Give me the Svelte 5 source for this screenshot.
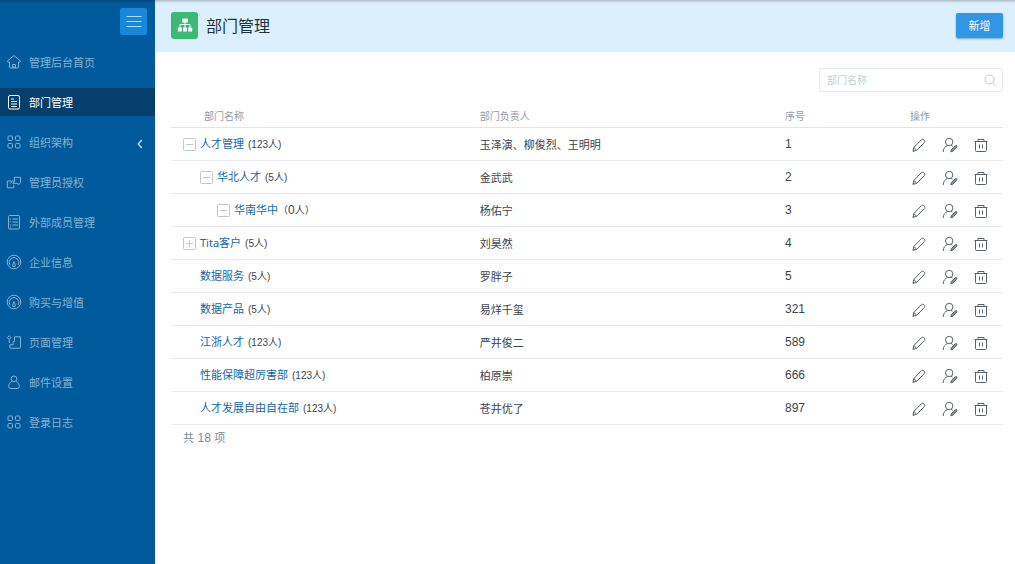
<script>
  const menu = [
    { label: "管理后台首页", icon: "home" },
    { label: "部门管理", icon: "doc", active: true },
    { label: "组织架构", icon: "grid", children: true },
    { label: "管理员授权", icon: "share" },
    { label: "外部成员管理", icon: "list" },
    { label: "企业信息", icon: "gauge" },
    { label: "购买与增值", icon: "gauge" },
    { label: "页面管理", icon: "page" },
    { label: "邮件设置", icon: "user" },
    { label: "登录日志", icon: "grid" },
  ];

  const departments = [
    { name: "人才管理", count: 123, leader: "玉泽演、柳俊烈、王明明", order: 1, level: 0, toggle: "minus" },
    { name: "华北人才", count: 5, leader: "金武武", order: 2, level: 1, toggle: "minus" },
    { name: "华南华中", count: 0, leader: "杨佑宁", order: 3, level: 2, toggle: "minus" },
    { name: "Tita客户", count: 5, leader: "刘昊然", order: 4, level: 0, toggle: "plus" },
    { name: "数据服务", count: 5, leader: "罗胖子", order: 5, level: 0 },
    { name: "数据产品", count: 5, leader: "易烊千玺", order: 321, level: 0 },
    { name: "江浙人才", count: 123, leader: "严井俊二", order: 589, level: 0 },
    { name: "性能保障超厉害部", count: 123, leader: "柏原崇", order: 666, level: 0 },
    { name: "人才发展自由自在部", count: 123, leader: "苍井优了", order: 897, level: 0 },
  ];

  let keyword = $state("");
</script>

{#snippet menuIcon(name)}
  <svg class="menu-icon" viewBox="0 0 16 16" aria-hidden="true">
    {#if name === "home"}
      <path d="M3.5 8v5q0 1 1 1h7q1 0 1-1V8l1.3.3.8-1.2L8.7 2q-.7-.5-1.4 0L1.4 7.1l.8 1.2zM6.5 14v-3.5h3V14M8 12v2" />
    {:else if name === "doc"}
      <rect x="2.5" y="1.5" width="11" height="13.5" rx="1.5" />
      <path d="M5 5h3M5 7.5h6M5 10h6M5 12.5h6" />
    {:else if name === "grid"}
      <rect x="2" y="2" width="4.5" height="4.5" rx="1" />
      <rect x="9.5" y="2" width="4.5" height="4.5" rx="1" />
      <rect x="2" y="9.5" width="4.5" height="4.5" rx="1" />
      <rect x="9.5" y="9.5" width="4.5" height="4.5" rx="1" />
    {:else if name === "share"}
      <path d="M5.5 7H1.3v6.8h6.5v-3M8.2 3.3h6.3v5.2L13 10.5l-2-1.2H6.7l2-1.5zM4.3 9.5l2.2-3 1.7 1.3" />
    {:else if name === "list"}
      <rect x="2.5" y="1.5" width="11" height="13.5" rx="1" />
      <path d="M6.5 5H12M6.5 8H12M6.5 11H12M4 5h1M4 8h1M4 11h1M4 13h1" />
    {:else if name === "gauge"}
      <circle cx="8" cy="8" r="6.8" />
      <path d="M4 11A4.8 4.8 0 1 1 12 11M8 7.5l1.2 3.4a1.3 1.3 0 1 1-2.4 0z" />
    {:else if name === "page"}
      <path d="M8.5 6.2V2.8h6v10.7q0 .7-.7.7H4.5q-.7 0-.7-.7v-2.7h3.4V7.5h1.3zM3.3 5.5v3.5M3.3 1.8 5.2 3.6l-1.9 1.9-1.9-1.9z" />
    {:else if name === "user"}
      <circle cx="8" cy="4.8" r="2.8" />
      <path d="M5.8 7.5C3.8 8.3 2.7 10.3 2.7 12.5q0 2 2 2h6.6q2 0 2-2c0-2.2-1.1-4.2-3.1-5" />
    {/if}
  </svg>
{/snippet}

<div class="layout">
  <aside class="sidebar">
    <div class="sidebar-top">
      <button class="collapse" type="button" aria-label="菜单">
        <svg viewBox="0 0 16 16" aria-hidden="true">
          <path d="M.5 2.5h15M.5 7.5h15M.5 12.5h15" />
        </svg>
      </button>
    </div>
    <nav>
      <ul>
        {#each menu as item}
          <li>
            <a href="#menu" class:active={item.active}>
              {@render menuIcon(item.icon)}
              <span>{item.label}</span>
              {#if item.children}
                <svg class="arrow" viewBox="0 0 6 10" aria-hidden="true"><path d="M4.8 1 1.2 5l3.6 4" /></svg>
              {/if}
            </a>
          </li>
        {/each}
      </ul>
    </nav>
  </aside>

  <main>
    <header>
      <span class="logo">
        <svg viewBox="0 0 16 16" aria-hidden="true">
          <path d="M8 5v6M3 11V7.5h10V11" />
          <rect x="5.2" y="1.5" width="5.6" height="4" rx="0.6" />
          <rect x="0.8" y="10.5" width="4" height="4" rx="0.6" />
          <rect x="6" y="10.5" width="4" height="4" rx="0.6" />
          <rect x="11.2" y="10.5" width="4" height="4" rx="0.6" />
        </svg>
      </span>
      <h1>部门管理</h1>
      <button class="add" type="button">新增</button>
    </header>

    <section class="content">
      <div class="search">
        <input type="text" placeholder="部门名称" aria-label="部门名称" bind:value={keyword} />
        <svg viewBox="0 0 12 12" aria-hidden="true">
          <circle cx="5.5" cy="5.5" r="4.5" />
          <path d="m9 9 2.3 2.3" />
        </svg>
      </div>

      <table>
        <thead>
          <tr>
            <th class="col-name">部门名称</th>
            <th class="col-leader">部门负责人</th>
            <th class="col-order">序号</th>
            <th class="col-actions">操作</th>
          </tr>
        </thead>
        <tbody>
          {#each departments as dept}
            <tr>
              <td>
                <div class="name level-{dept.level}">
                  {#if dept.toggle}
                    <button class="toggle" type="button" aria-label={dept.toggle === "plus" ? "展开" : "收起"}>
                      <svg viewBox="0 0 13 13" aria-hidden="true">
                        <rect x="0.5" y="0.5" width="12" height="12" rx="1" />
                        <path d={dept.toggle === "plus" ? "M3 6.5h7M6.5 3v7" : "M3 6.5h7"} />
                      </svg>
                    </button>
                  {:else}
                    <span class="toggle"></span>
                  {/if}
                  <div>
                    <a href="#dept">{dept.name}</a>{#if dept.count}<span class="count">({dept.count}人)</span>{:else}<span class="count empty">（<b>{dept.count}</b>人）</span>{/if}
                  </div>
                </div>
              </td>
              <td class="leader">{dept.leader}</td>
              <td class="order">{dept.order}</td>
              <td>
                <div class="actions">
                  <button type="button" aria-label="编辑">
                    <svg viewBox="0 0 16 16" aria-hidden="true">
                      <path d="M2 14.3l.8-3.8 7.6-7.8q1.2-1.1 2.4 0l.5.5q1.1 1.2 0 2.4l-7.6 7.8zM2.8 10.5l3 2.9M2 14.3l1.6-1.6" />
                    </svg>
                  </button>
                  <button type="button" aria-label="设置负责人">
                    <svg viewBox="0 0 16 16" aria-hidden="true">
                      <circle cx="7.2" cy="5" r="3.7" />
                      <path d="M1.2 15c0-3.5 1.8-5.4 4.3-6.4M9 8.3l1.5.9" />
                      <path class="nib" d="M8.8 14.8l.5-2.2 4-3.9q1-.6 1.4 0t0 1.6l-3.8 3.9z" />
                    </svg>
                  </button>
                  <button type="button" aria-label="删除">
                    <svg viewBox="0 0 16 16" aria-hidden="true">
                      <path d="M1.5 4.5h13M5 4.3V2.5h6v1.8M2.5 4.5v9q0 1 1 1h9q1 0 1-1v-9M6.5 7.5v4M9.5 7.5v4" />
                    </svg>
                  </button>
                </div>
              </td>
            </tr>
          {/each}
        </tbody>
      </table>
      <p class="total">共 <span>18</span> 项</p>
    </section>
  </main>
</div>

<style>
  :global(body) {
    margin: 0;
    background: #fff;
    font-family: "Noto Sans CJK SC", sans-serif;
    font-size: 11px;
    color: #3c444d;
  }

  svg {
    display: block;
    fill: none;
    stroke: currentColor;
    stroke-width: 1;
  }

  button {
    padding: 0;
    border: 0;
    background: none;
    color: inherit;
    font: inherit;
    cursor: pointer;
  }

  a {
    color: inherit;
    text-decoration: none;
  }

  .layout {
    display: flex;
    min-height: 100vh;
  }

  .layout::before {
    content: "";
    position: fixed;
    top: 0;
    left: 0;
    right: 0;
    height: 3px;
    background: linear-gradient(rgba(0, 0, 0, 0.22), rgba(0, 0, 0, 0));
  }

  /* sidebar */
  .sidebar {
    flex: none;
    width: 155px;
    background: #005a9b;
    color: #85b2d3;
  }

  .sidebar-top {
    display: flex;
    justify-content: flex-end;
    padding: 8px 8px 7px;
  }

  .collapse {
    display: grid;
    place-items: center;
    width: 27px;
    height: 27px;
    border-radius: 2px;
    background: #1787db;
    color: #b9dcf6;
  }

  .collapse svg {
    width: 16px;
    height: 16px;
  }

  ul {
    margin: 0;
    padding: 0;
    list-style: none;
  }

  li {
    display: flex;
    align-items: center;
    height: 40px;
  }

  li a {
    display: flex;
    flex: 1;
    align-items: center;
    gap: 7px;
    height: 28px;
    padding: 0 12px 0 6px;
  }

  li a.active {
    background: #05406d;
    color: #fff;
  }

  .menu-icon {
    width: 16px;
    height: 16px;
  }

  .arrow {
    width: 6px;
    height: 10px;
    margin: 4px 0 0 auto;
    color: #c2dcee;
    stroke-width: 1.4;
  }

  /* page header */
  main {
    flex: 1;
    min-width: 0;
  }

  header {
    display: flex;
    align-items: center;
    box-sizing: border-box;
    height: 52px;
    padding: 0 12px 2px 16px;
    background: #dceffd;
  }

  .logo {
    display: grid;
    place-items: center;
    width: 27px;
    height: 27px;
    border-radius: 3px;
    background: #3bba76;
  }

  .logo svg {
    width: 16px;
    height: 16px;
    color: #fff;
  }

  .logo rect {
    fill: #fff;
    stroke: none;
  }

  h1 {
    margin: 0 auto 0 8px;
    font-size: 16px;
    font-weight: 400;
    line-height: 24px;
    color: #22303d;
  }

  .add {
    width: 47px;
    height: 25px;
    border-radius: 2px;
    background: #3296e6;
    box-shadow: 0 1px 2px rgba(30, 90, 150, 0.5);
    color: #fff;
  }

  /* table area */
  .content {
    padding: 16px 12px 16px 16px;
  }

  .search {
    display: flex;
    align-items: center;
    box-sizing: border-box;
    width: 184px;
    height: 24px;
    margin: 0 0 12px auto;
    padding: 0 6px 0 7px;
    border: 1px solid #e6e9ec;
    border-radius: 3px;
    color: #c3c9ce;
  }

  .search input {
    flex: 1;
    min-width: 0;
    height: 20px;
    padding: 0 0 2px;
    border: 0;
    outline: 0;
    background: none;
    color: #3c444d;
    font: inherit;
    font-size: 10px;
  }

  .search input::placeholder {
    color: #c8cdd2;
    opacity: 1;
  }

  .search svg {
    width: 12px;
    height: 12px;
  }

  table {
    width: 100%;
    border-collapse: separate;
    border-spacing: 0;
    table-layout: fixed;
  }

  th,
  td {
    box-sizing: border-box;
    height: 33px;
    padding: 0;
    border-bottom: 1px solid #e9ecef;
    text-align: left;
    line-height: 16px;
  }

  th {
    height: 24px;
    border-bottom-color: #dfe5ea;
    color: #929ba3;
    font-size: 10px;
    font-weight: 400;
  }

  .col-name {
    width: 37%;
    padding-left: 33px;
  }

  .col-leader,
  .leader {
    padding-left: 1px;
  }

  .col-order {
    width: 125px;
  }

  .col-actions {
    width: 93px;
  }

  .name {
    display: flex;
    align-items: center;
    padding-left: 12px;
  }

  .level-1 {
    padding-left: 29px;
  }

  .level-2 {
    padding-left: 46px;
  }

  .toggle {
    width: 13px;
    height: 13px;
    margin-right: 4px;
    color: #c0c8cf;
  }

  .name a {
    color: #1468a8;
    font-family: "Noto Sans", "Noto Sans CJK SC", sans-serif;
  }

  .count {
    margin-left: 4px;
    font-family: "Liberation Sans", "Noto Sans CJK SC", sans-serif;
    font-size: 10px;
  }

  .count.empty {
    margin-left: 0;
  }

  .count b {
    font-size: 12px;
    font-weight: 400;
  }

  .order {
    font-family: "Liberation Sans", sans-serif;
    font-size: 12px;
  }

  .actions {
    display: flex;
    gap: 15px;
    padding: 1px 0 0 1px;
    color: #59626a;
  }

  .actions svg {
    width: 16px;
    height: 16px;
  }

  .nib {
    fill: #8a9096;
  }

  .total {
    margin: 4px 0 0 12px;
    line-height: 16px;
    color: #7c8a96;
  }

  .total span {
    margin: 0 1px;
    font-family: "Liberation Sans", sans-serif;
    font-size: 12px;
  }
</style>
